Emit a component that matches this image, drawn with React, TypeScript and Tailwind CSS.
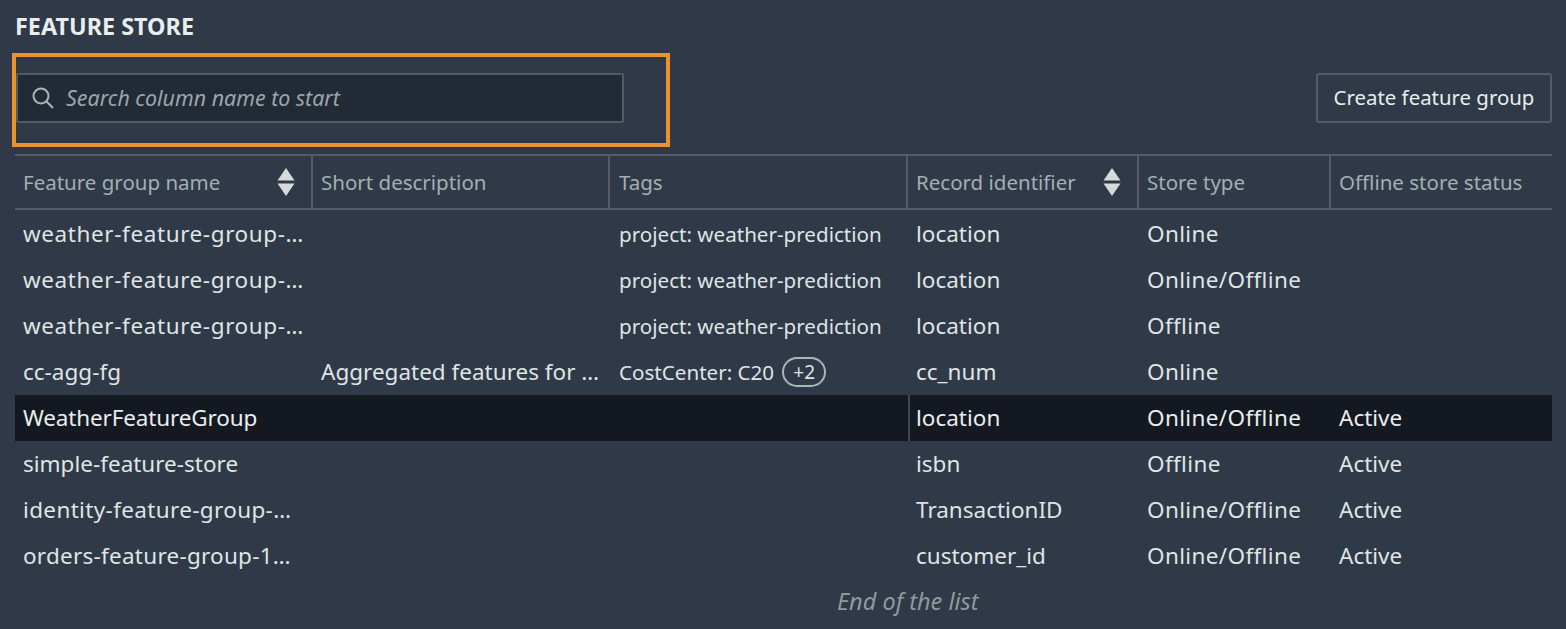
import React from "react";

const cols = "grid grid-cols-[298px_297px_298px_231px_192px_221px]";

type Row = { n: string; nt?: string; d?: string; t?: string; plus?: boolean; r: string; s: string; o?: string; sel?: boolean };
const rows: Row[] = [
  { n: "weather-feature-group-…", nt: "tracking-[0.6px]", t: "project: weather-prediction", r: "location", s: "Online" },
  { n: "weather-feature-group-…", nt: "tracking-[0.6px]", t: "project: weather-prediction", r: "location", s: "Online/Offline" },
  { n: "weather-feature-group-…", nt: "tracking-[0.6px]", t: "project: weather-prediction", r: "location", s: "Offline" },
  { n: "cc-agg-fg", d: "Aggregated features for …", t: "CostCenter: C20", plus: true, r: "cc_num", s: "Online" },
  { n: "WeatherFeatureGroup", nt: "tracking-[-0.15px]", r: "location", s: "Online/Offline", o: "Active", sel: true },
  { n: "simple-feature-store", r: "isbn", s: "Offline", o: "Active" },
  { n: "identity-feature-group-…", nt: "tracking-[0.35px]", r: "TransactionID", s: "Online/Offline", o: "Active" },
  { n: "orders-feature-group-1…", nt: "tracking-[0.25px]", r: "customer_id", s: "Online/Offline", o: "Active" },
];

function Sort() {
  return (
    <svg width="20" height="30" viewBox="0 0 20 30" className="shrink-0">
      <path d="M10 1 L18.5 13.5 H1.5 Z" fill="#d5dbdb" />
      <path d="M10 29 L18.5 16.5 H1.5 Z" fill="#d5dbdb" />
    </svg>
  );
}

function Head({ label, sort, border = true, pad = "pl-2" }: { label: string; sort?: boolean; border?: boolean; pad?: string }) {
  return (
    <div className={`flex items-center justify-between pr-[15px] text-[20.5px] text-[#a3afb3] ${pad} ${border ? "border-r-2 border-[#545b64]" : ""}`}>
      <span className="whitespace-nowrap">{label}</span>
      {sort && <Sort />}
    </div>
  );
}

export default function App() {
  return (
    <div className="relative h-[629px] w-[1566px] overflow-hidden bg-[#2f3947] font-['Noto_Sans','Open_Sans',sans-serif] text-[#dfe4e4]">
      <div className="px-[15px] pt-[12px]">
        <h1 className="h-[28px] text-[23.4px] font-bold leading-[28px] text-[#eaeded]">FEATURE STORE</h1>

        <div className="mt-[33px] flex items-center justify-between">
          <div className="ml-[1px] flex h-[50px] w-[608px] items-center gap-[11px] rounded-[2px] border-2 border-[#545b64] bg-[#222a36] pl-[13px]">
            <svg width="24" height="24" viewBox="0 0 24 24" fill="none" stroke="#aab7b8" strokeWidth="2" className="shrink-0">
              <circle cx="10" cy="10" r="7.5" />
              <path d="M15.5 15.5 L22 22" />
            </svg>
            <span className="text-[21.4px] italic text-[#9aa6aa]">Search column name to start</span>
          </div>
          <button className="mr-[-1px] flex h-[50px] w-[236px] items-center justify-center rounded-[3px] border-2 border-[#545b64] pb-[2px] text-[20.4px] text-[#eaeded]">
            Create feature group
          </button>
        </div>

        <div className="mt-[31px] w-[1537px]">
          <div className={`${cols} h-[56px] border-y-2 border-[#545b64]`}>
            <Head label="Feature group name" sort />
            <Head label="Short description" />
            <Head label="Tags" pad="pl-[9px]" />
            <Head label="Record identifier" sort />
            <Head label="Store type" />
            <Head label="Offline store status" border={false} />
          </div>
          <div className="pt-px">
            {rows.map((row, i) => (
              <div key={i} className={`${cols} h-[46px] items-center text-[22.5px] ${row.sel ? "bg-[#141921] text-[#eaeded]" : ""}`}>
                <div className={`whitespace-nowrap pl-2 ${row.nt ?? ""}`}>{row.n}</div>
                <div className="whitespace-nowrap pl-2">{row.d}</div>
                <div className="flex items-center gap-[8px] whitespace-nowrap pl-[9px] text-[20.6px]">
                  {row.t}
                  {row.plus && (
                    <span className="flex h-[30px] w-[44px] items-center justify-center rounded-full border-2 border-[#aab7b8] text-[19px]">+2</span>
                  )}
                </div>
                <div className={`flex h-full items-center whitespace-nowrap ${row.sel ? "border-l-2 border-[#414750] pl-[6px]" : "pl-2"}`}>{row.r}</div>
                <div className="whitespace-nowrap pl-2 tracking-[0.35px]">{row.s}</div>
                <div className="whitespace-nowrap pl-2">{row.o}</div>
              </div>
            ))}
          </div>
          <p className="ml-[822px] mt-[1px] text-[23.5px] italic leading-[42px] text-[#8d9a9e]">End of the list</p>
        </div>
      </div>

      <div className="absolute left-[12px] top-[53px] h-[94px] w-[658px] border-[4px] border-[#ec9130]" />
    </div>
  );
}
